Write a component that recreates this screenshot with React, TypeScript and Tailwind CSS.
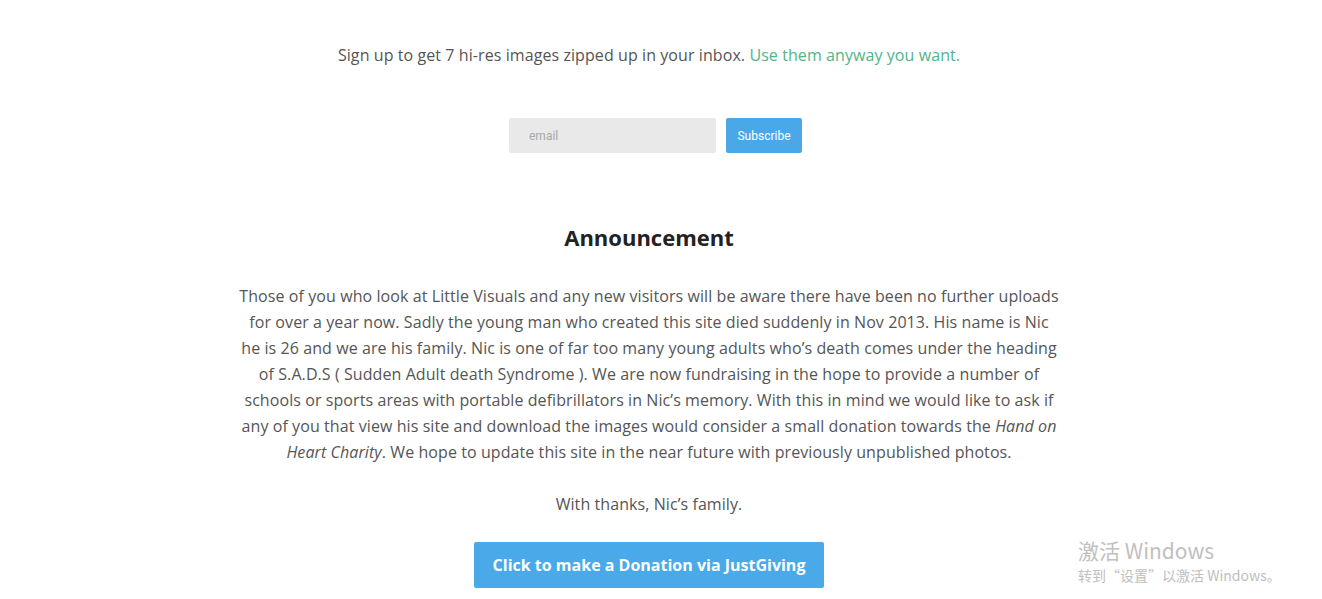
export default function App() {
  return (
    <div className="relative h-[599px] w-full overflow-hidden bg-white" style={{ fontFamily: "'Open Sans', sans-serif" }}>
      <main className="w-[1298px] flex flex-col items-center">
        {/* Newsletter */}
        <p className="mt-[43px] text-[16px] leading-[24px] tracking-[0.08px] text-[#555]">
          Sign up to get 7 hi-res images zipped up in your inbox.{" "}
          <a href="#" className="text-[#4fb58a]">Use them anyway you want.</a>
        </p>

        <form className="mt-[51px] ml-[13px] flex gap-[10px]" onSubmit={(e) => e.preventDefault()}>
          <input
            type="email"
            placeholder="email"
            className="h-[35px] w-[207px] rounded-[2px] bg-[#e9e9e9] px-[20px] text-[12px] text-[#999] placeholder:text-[#a8a8a8] outline-none"
            style={{ fontFamily: "Roboto, sans-serif" }}
          />
          <button
            className="h-[35px] w-[76px] rounded-[2px] bg-[#4aa8e8] text-[12px] text-white"
            style={{ fontFamily: "Roboto, sans-serif" }}
          >
            Subscribe
          </button>
        </form>

        {/* Announcement */}
        <h2 className="mt-[69px] text-[22px] font-bold leading-[30px] text-[#222]">Announcement</h2>

        <p className="mt-[31px] w-[840px] text-center text-[16px] leading-[26px] tracking-[0.08px] text-[#555]">
          Those of you who look at Little Visuals and any new visitors will be aware there have been no further uploads
          <br />
          for over a year now. Sadly the young man who created this site died suddenly in Nov 2013. His name is Nic
          <br />
          he is 26 and we are his family. Nic is one of far too many young adults who’s death comes under the heading
          <br />
          of S.A.D.S ( Sudden Adult death Syndrome ). We are now fundraising in the hope to provide a number of
          <br />
          schools or sports areas with portable defibrillators in Nic’s memory. With this in mind we would like to ask if
          <br />
          any of you that view his site and download the images would consider a small donation towards the{" "}
          <em>Hand on</em>
          <br />
          <em>Heart Charity</em>. We hope to update this site in the near future with previously unpublished photos.
        </p>

        <p className="mt-[26px] text-[16px] leading-[26px] tracking-[0.08px] text-[#555]">With thanks, Nic’s family.</p>

        <a
          href="#"
          className="mt-[25px] flex h-[46px] w-[350px] items-center justify-center rounded-[2px] bg-[#4aa9e8] text-[16px] font-bold text-white"
        >
          Click to make a Donation via JustGiving
        </a>
      </main>

      {/* Windows activation watermark */}
      <div
        className="absolute left-[1078px] top-[537px] text-[#c0c0c0]"
        style={{ fontFamily: "'Noto Sans CJK SC', 'Noto Sans', sans-serif" }}
      >
        <div className="text-[21px] leading-[27px]">激活 Windows</div>
        <div className="text-[14px] leading-[22px]">转到“设置”以激活 Windows。</div>
      </div>
    </div>
  );
}
